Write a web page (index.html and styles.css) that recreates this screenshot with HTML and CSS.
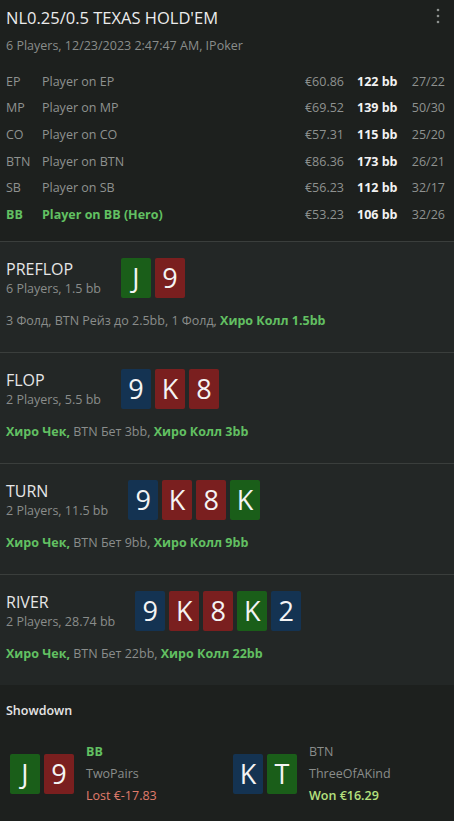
FILE: index.html
```html
<!DOCTYPE html>
<html lang="ru">
<head>
    <meta charset="UTF-8">
    <meta name="viewport" content="width=device-width, initial-scale=1.0">
    <title>Hand history</title>
    <link rel="stylesheet" href="styles.css">
</head>
<body>
    <!-- hand header -->
    <div class="hand-header">
        <div class="title-row">
            <h1>NL0.25/0.5 TEXAS HOLD'EM</h1>
            <svg class="menu" width="4" height="16" viewBox="0 0 4 16">
                <circle cx="2" cy="2" r="1.3" fill="#8d918f"/>
                <circle cx="2" cy="8" r="1.3" fill="#8d918f"/>
                <circle cx="2" cy="14" r="1.3" fill="#8d918f"/>
            </svg>
        </div>
        <p class="sub">6 Players, 12/23/2023 2:47:47 AM, IPoker</p>

        <div class="players">
            <div class="player"><span class="pos">EP</span><span class="name">Player on EP</span><span class="money">€60.86</span><span class="bb">122 bb</span><span class="stat">27/22</span></div>
            <div class="player"><span class="pos">MP</span><span class="name">Player on MP</span><span class="money">€69.52</span><span class="bb">139 bb</span><span class="stat">50/30</span></div>
            <div class="player"><span class="pos">CO</span><span class="name">Player on CO</span><span class="money">€57.31</span><span class="bb">115 bb</span><span class="stat">25/20</span></div>
            <div class="player"><span class="pos">BTN</span><span class="name">Player on BTN</span><span class="money">€86.36</span><span class="bb">173 bb</span><span class="stat">26/21</span></div>
            <div class="player"><span class="pos">SB</span><span class="name">Player on SB</span><span class="money">€56.23</span><span class="bb">112 bb</span><span class="stat">32/17</span></div>
            <div class="player hero"><span class="pos">BB</span><span class="name">Player on BB (Hero)</span><span class="money">€53.23</span><span class="bb">106 bb</span><span class="stat">32/26</span></div>
        </div>
    </div>

    <!-- streets -->
    <div class="street">
        <div class="street-top">
            <div class="street-info">
                <h2>PREFLOP</h2>
                <p class="sub">6 Players, 1.5 bb</p>
            </div>
            <div class="cards">
                <span class="card green">J</span>
                <span class="card red">9</span>
            </div>
        </div>
        <p class="actions">3 Фолд, BTN Рейз до 2.5bb, 1 Фолд, <b>Хиро Колл 1.5bb</b></p>
    </div>

    <div class="street">
        <div class="street-top">
            <div class="street-info">
                <h2>FLOP</h2>
                <p class="sub">2 Players, 5.5 bb</p>
            </div>
            <div class="cards">
                <span class="card blue">9</span>
                <span class="card red">K</span>
                <span class="card red">8</span>
            </div>
        </div>
        <p class="actions"><b>Хиро Чек,</b> BTN Бет 3bb, <b>Хиро Колл 3bb</b></p>
    </div>

    <div class="street">
        <div class="street-top">
            <div class="street-info">
                <h2>TURN</h2>
                <p class="sub">2 Players, 11.5 bb</p>
            </div>
            <div class="cards">
                <span class="card blue">9</span>
                <span class="card red">K</span>
                <span class="card red">8</span>
                <span class="card green">K</span>
            </div>
        </div>
        <p class="actions"><b>Хиро Чек,</b> BTN Бет 9bb, <b>Хиро Колл 9bb</b></p>
    </div>

    <div class="street last">
        <div class="street-top">
            <div class="street-info">
                <h2>RIVER</h2>
                <p class="sub">2 Players, 28.74 bb</p>
            </div>
            <div class="cards">
                <span class="card blue">9</span>
                <span class="card red">K</span>
                <span class="card red">8</span>
                <span class="card green">K</span>
                <span class="card blue">2</span>
            </div>
        </div>
        <p class="actions"><b>Хиро Чек,</b> BTN Бет 22bb, <b>Хиро Колл 22bb</b></p>
    </div>

    <!-- showdown -->
    <div class="showdown">
        <h3>Showdown</h3>
        <div class="sd-grid">
            <div class="sd-player">
                <div class="cards">
                    <span class="card green">J</span>
                    <span class="card red">9</span>
                </div>
                <div class="sd-info">
                    <span class="sd-pos hero-pos">BB</span>
                    <span class="sd-hand">TwoPairs</span>
                    <span class="lost">Lost €-17.83</span>
                </div>
            </div>
            <div class="sd-player">
                <div class="cards">
                    <span class="card blue">K</span>
                    <span class="card green">T</span>
                </div>
                <div class="sd-info">
                    <span class="sd-pos">BTN</span>
                    <span class="sd-hand">ThreeOfAKind</span>
                    <span class="won">Won €16.29</span>
                </div>
            </div>
        </div>
    </div>
</body>
</html>
```

FILE: styles.css
```css
body {
    font-family: "Open Sans", "Noto Sans", sans-serif;
    background-color: #1d201e;
    color: #e8e8e8;
    margin: 0;
    padding: 0;
    width: 454px;
}

p, h1, h2, h3 {
    margin: 0;
}

.sub {
    font-size: 12.5px;
    color: #8a8d8b;
}

/* header */
.hand-header {
    padding: 7px 6px 13px 6px;
    border-bottom: 1px solid #3a3e3c;
}

.title-row {
    display: flex;
    justify-content: space-between;
    align-items: flex-start;
}

h1 {
    font-size: 16.5px;
    font-weight: 400;
    color: #ececec;
    line-height: 22px;
}

.menu {
    margin: 1px 8px 0 0;
}

.hand-header .sub {
    margin-top: 8px;
    line-height: 18px;
}

.players {
    margin-top: 13px;
    display: flex;
    flex-direction: column;
}

.player {
    display: grid;
    grid-template-columns: 36px 1fr auto 51px 40px;
    align-items: center;
    height: 26.6px;
    font-size: 12.5px;
    color: #8f9290;
}

.player .money {
    text-align: right;
    padding-right: 13px;
}

.player .bb {
    color: #f2f2f2;
    font-weight: 700;
}

.player .stat {
    text-align: right;
    padding-right: 3px;
}

.player.hero .pos,
.player.hero .name {
    color: #62c062;
    font-weight: 700;
}

/* streets */
.street {
    background-color: #232726;
    padding: 16px 6px 0 6px;
    height: 94px;
    border-bottom: 1px solid #3a3e3c;
}

.street.last {
    border-bottom: none;
}

.street-top {
    display: flex;
    align-items: center;
    gap: 20px;
}

.street-info h2 {
    font-size: 16px;
    font-weight: 400;
    color: #e6e6e6;
    line-height: 22px;
}

.street-info .sub {
    line-height: 18px;
}

.cards {
    display: flex;
    gap: 4px;
}

.card {
    width: 30px;
    height: 40px;
    border-radius: 2px;
    display: flex;
    align-items: center;
    justify-content: center;
    font-size: 27px;
    font-weight: 400;
    line-height: 1;
    color: #f4f4f4;
}

.card.green {
    background-color: #1a5e19;
}

.card.red {
    background-color: #7a1f1f;
}

.card.blue {
    background-color: #143352;
}

.actions {
    margin-top: 14px;
    font-size: 12.5px;
    color: #8a8d8b;
}

.actions b {
    color: #62c062;
    font-weight: 700;
}

/* showdown */
.showdown {
    background-color: #1d201e;
    padding: 17px 6px 0 6px;
    height: 119px;
}

.showdown h3 {
    font-size: 12.5px;
    font-weight: 600;
    color: #e6e6e6;
}

.sd-grid {
    margin-top: 22px;
    display: grid;
    grid-template-columns: 223px 1fr;
    padding-left: 4px;
}

.sd-player {
    display: flex;
    align-items: center;
    gap: 12px;
}

.sd-info {
    display: flex;
    flex-direction: column;
    font-size: 12.5px;
    line-height: 22px;
    color: #8a8d8b;
}

.sd-pos.hero-pos {
    color: #62c062;
    font-weight: 700;
}

.lost {
    color: #e07c6c;
}

.won {
    color: #b6e07e;
    font-weight: 600;
}
```
